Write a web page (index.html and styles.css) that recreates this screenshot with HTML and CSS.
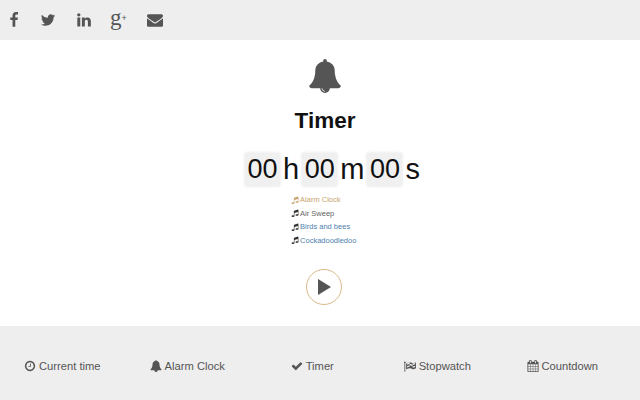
FILE: index.html
```html
<!DOCTYPE html>
<html lang="en">
<head>
    <meta charset="UTF-8">
    <title>Timer</title>
    <link rel="stylesheet" href="styles.css">
</head>
<body>
    <svg class="defs" width="0" height="0">
        <symbol id="i-bell" viewBox="0 0 1792 1792"><path d="M912 1696q0-16-16-16-59 0-101.5-42.5t-42.5-101.5q0-16-16-16t-16 16q0 73 51.5 124.5t124.5 51.5q16 0 16-16zm816-288q0 52-38 90t-90 38h-448q0 106-75 181t-181 75-181-75-75-181h-448q-52 0-90-38t-38-90q50-42 91-88t85-119.5 74.5-158.5 50-206 19.5-260q0-152 117-282.5t307-158.5q-8-19-8-39 0-40 28-68t68-28 68 28 28 68q0 20-8 39 190 28 307 158.5t117 282.5q0 139 19.5 260t50 206 74.5 158.5 85 119.5 91 88z"/></symbol>
        <symbol id="i-music" viewBox="0 0 1792 1792"><path d="M1664 224v1120q0 50-34 89t-86 60.5-103.5 32-96.5 10.5-96.5-10.5-103.5-32-86-60.5-34-89 34-89 86-60.5 103.5-32 96.5-10.5q105 0 192 39v-537l-768 237v709q0 50-34 89t-86 60.5-103.5 32-96.5 10.5-96.5-10.5-103.5-32-86-60.5-34-89 34-89 86-60.5 103.5-32 96.5-10.5q105 0 192 39v-967q0-31 19-56.5t49-35.5l832-256q12-4 28-4 40 0 68 28t28 68z"/></symbol>
    </svg>

    <div class="social">
        <a href="#"><svg class="icon" viewBox="0 0 1792 1792"><path d="M1343 12v264h-157q-86 0-116 36t-30 108v189h293l-39 296h-254v759h-306v-759h-255v-296h255v-218q0-186 104-288.5t277-102.5q147 0 228 12z"/></svg></a>
        <a href="#" class="tw"><svg class="icon" viewBox="0 0 1792 1792"><path d="M1684 408q-67 98-162 167 1 14 1 42 0 130-38 259.5t-115.5 248.5-184.5 210.5-258 146-323 54.5q-271 0-496-145 35 4 76 4 225 0 401-138-105-2-188-64.5t-114-159.5q33 5 61 5 43 0 85-11-112-23-185.5-111.5t-73.5-205.5v-4q68 38 146 41-66-44-105-115t-39-154q0-88 44-163 121 149 294.5 238.5t371.5 99.5q-8-38-8-74 0-134 94.5-228.5t228.5-94.5q140 0 236 102 109-21 205-78-37 115-142 178 100-12 200-54z"/></svg></a>
        <a href="#"><svg class="icon" viewBox="0 0 1792 1792"><path d="M477 625v991h-330v-991h330zm21-306q1 73-50.5 122t-135.5 49h-2q-82 0-132-49t-50-122q0-74 51.5-122.5t134.5-48.5 133 48.5 51 122.5zm1166 729v568h-329v-530q0-105-40.5-164.5t-126.5-59.5q-63 0-105.5 34.5t-63.5 85.5q-11 30-11 81v553h-329q2-399 2-647t-1-296l-1-48h329v144h-2q20-32 41-56t56.5-52 87-43.5 114.5-15.5q171 0 275 113.5t104 332.5z"/></svg></a>
        <a href="#" class="gplus">g<span>+</span></a>
        <a href="#"><svg class="icon" viewBox="0 0 1792 1792"><path d="M1792 710v794q0 66-47 113t-113 47h-1472q-66 0-113-47t-47-113v-794q44 49 101 87 362 246 497 345 57 42 92.5 65.5t94.5 48 110 24.5h2q51 0 110-24.5t94.5-48 92.5-65.5q170-123 498-345 57-39 100-87zm0-294q0 79-49 151t-122 123q-376 261-468 325-10 7-42.5 30.5t-54 38-52 32.5-57.5 27-50 9h-2q-23 0-50-9t-57.5-27-52-32.5-54-38-42.5-30.5q-91-64-262-182.5t-205-142.5q-62-42-117-115.5t-55-136.5q0-78 41.5-130t118.5-52h1472q65 0 112.5 47t47.5 113z"/></svg></a>
    </div>

    <div class="main">
        <svg class="bell"><use href="#i-bell"/></svg>
        <h1>Timer</h1>

        <div class="clock">
            <span class="digits">00</span><span class="unit">h</span>
            <span class="digits">00</span><span class="unit">m</span>
            <span class="digits">00</span><span class="unit">s</span>
        </div>

        <ul class="sounds">
            <li class="selected"><svg><use href="#i-music"/></svg>Alarm Clock</li>
            <li class="grey"><svg><use href="#i-music"/></svg>Air Sweep</li>
            <li><svg><use href="#i-music"/></svg>Birds and bees</li>
            <li><svg><use href="#i-music"/></svg>Cockadoodledoo</li>
        </ul>

        <button class="play"><svg viewBox="0 0 14 16"><path d="M0 0L13 8L0 16z"/></svg></button>
    </div>

    <div class="nav">
        <a href="#"><svg viewBox="0 0 1792 1792"><path d="M1024 544v448q0 14-9 23t-23 9h-320q-14 0-23-9t-9-23v-64q0-14 9-23t23-9h224v-352q0-14 9-23t23-9h64q14 0 23 9t9 23zm416 352q0-148-73-273t-198-198-273-73-273 73-198 198-73 273 73 273 198 198 273 73 273-73 198-198 73-273zm224 0q0 209-103 385.5t-279.5 279.5-385.5 103-385.5-103-279.5-279.5-103-385.5 103-385.5 279.5-279.5 385.5-103 385.5 103 279.5 279.5 103 385.5z"/></svg>Current time</a>
        <a href="#"><svg><use href="#i-bell"/></svg>Alarm Clock</a>
        <a href="#"><svg viewBox="0 0 1792 1792"><path d="M1671 566q0 40-28 68l-724 724-136 136q-28 28-68 28t-68-28l-136-136-362-362q-28-28-28-68t28-68l136-136q28-28 68-28t68 28l294 295 656-657q28-28 68-28t68 28l136 136q28 28 28 68z"/></svg>Timer</a>
        <a href="#"><svg viewBox="0 0 1792 1792"><path d="M832 1000v-192q-181 16-384 117v185q205-96 384-110zm0-418v-197q-172 8-384 126v189q215-111 384-118zm832 463v-184q-235 116-384 71v-224q-20-6-39-15-5-3-33-17t-34.5-17-31.5-15-34.5-15.5-32.5-13-36-12.5-35-8.5-39.5-7.5-39.5-4-44-2q-23 0-49 3v222h19q102 0 192.5 29t197.5 82q19 9 39 15v188q42 17 91 17 120 0 293-92zm0-427v-189q-169 91-306 91-45 0-78-8v196q148 42 384-90zm-1408-260q0 35-17.5 64t-46.5 46v1266q0 14-9 23t-23 9h-64q-14 0-23-9t-9-23v-1266q-29-17-46.5-46t-17.5-64q0-53 37.5-90.5t90.5-37.5 90.5 37.5 37.5 90.5zm1536 64v763q0 39-35 57-10 5-17 9-218 116-369 116-88 0-158-35l-28-14q-64-33-99-48t-91-29-114-14q-102 0-235.5 44t-228.5 102q-15 9-33 9-16 0-32-8-32-19-32-56v-742q0-35 31-55 35-21 78.5-42.5t114-52 152.5-49.5 155-19q112 0 209 31t209 86q38 19 89 19 122 0 310-112 22-12 31-17 31-16 62 2 31 20 31 55z"/></svg>Stopwatch</a>
        <a href="#"><svg viewBox="0 0 1792 1792"><path d="M192 1664h288v-288h-288v288zm352 0h320v-288h-320v288zm-352-352h288v-320h-288v320zm352 0h320v-320h-320v320zm-352-384h288v-288h-288v288zm736 736h320v-288h-320v288zm-384-736h320v-288h-320v288zm768 736h288v-288h-288v288zm-384-352h320v-320h-320v320zm-352-864v-288q0-13-9.5-22.5t-22.5-9.5h-64q-13 0-22.5 9.5t-9.5 22.5v288q0 13 9.5 22.5t22.5 9.5h64q13 0 22.5-9.5t9.5-22.5zm736 864h288v-320h-288v320zm-384-384h320v-288h-320v288zm384 0h288v-288h-288v288zm32-480v-288q0-13-9.5-22.5t-22.5-9.5h-64q-13 0-22.5 9.5t-9.5 22.5v288q0 13 9.5 22.5t22.5 9.5h64q13 0 22.5-9.5t9.5-22.5zm384-64v1280q0 52-38 90t-90 38h-1408q-52 0-90-38t-38-90v-1280q0-52 38-90t90-38h128v-96q0-66 47-113t113-47h64q66 0 113 47t47 113v96h384v-96q0-66 47-113t113-47h64q66 0 113 47t47 113v96h128q52 0 90 38t38 90z"/></svg>Countdown</a>
    </div>
</body>
</html>
```

FILE: styles.css
```css
* { margin: 0; padding: 0; box-sizing: border-box; }
html, body { height: 100%; overflow: hidden; }
body { font-family: "Liberation Sans", Arial, sans-serif; color: #555; background: #fff; display: flex; flex-direction: column; }
a { color: inherit; text-decoration: none; }
.defs { position: absolute; }

.social { height: 40px; background: #eee; display: flex; align-items: center; padding-left: 6px; gap: 19px; flex: none; }
.social a { display: flex; color: #555; }
.social .tw { margin: 0 1px 0 -1px; }
.social .icon { width: 16px; height: 16px; fill: #555; }
.social .gplus { font-family: "Liberation Serif", serif; font-size: 23px; line-height: 16px; width: 16px; margin-left: -1px; margin-right: 2px; position: relative; top: -2px; }
.social .gplus span { font-family: "Liberation Sans", sans-serif; font-size: 9px; line-height: 16px; }

.main { flex: 1; display: flex; flex-direction: column; align-items: center; padding: 19px 0 0 10px; }
.bell { width: 34px; height: 34px; fill: #555; }
h1 { font-size: 22.5px; line-height: 26px; color: #111; margin-top: 15px; }

.clock { display: flex; align-items: center; margin: 18px 0 0 18px; height: 34px; font-size: 27px; color: #111; }
.digits { width: 35px; height: 33px; line-height: 33px; text-align: center; background: #f0f0f0; box-shadow: 0 0 3px #e2e2e2; }
.unit { margin: 0 3px; line-height: 33px; font-size: 29px; }

.sounds { list-style: none; margin: 7px 3px 0 0; font-size: 7.5px; line-height: 13.5px; color: #4f80ad; }
.sounds li { display: flex; align-items: center; }
.sounds svg { width: 8px; height: 8px; fill: #333; margin-right: 1.5px; }
.sounds .selected { color: #c8a46f; }
.sounds .selected svg { fill: #c8a46f; }
.sounds .grey { color: #666; }

.play { width: 36px; height: 36px; margin: 22px 2px 0 0; border: 1px solid #d9b98a; border-radius: 50%; background: #fff; display: flex; align-items: center; justify-content: center; }
.play svg { width: 14px; height: 16px; fill: #555; margin-left: 2px; }

.nav { height: 74px; background: #eee; display: flex; flex: none; padding: 6px 15px 0 0; }
.nav a { flex: 1; display: flex; align-items: center; justify-content: center; font-size: 11.2px; color: #555; }
.nav svg { width: 12px; height: 12px; fill: #555; margin-right: 2.5px; }
```
